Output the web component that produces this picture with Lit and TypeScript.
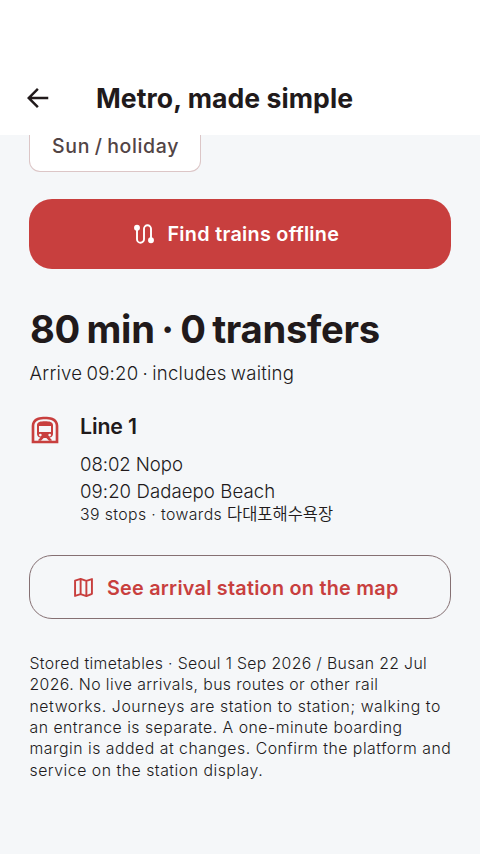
import { LitElement, html, css, svg } from "lit";
import { customElement } from "lit/decorators.js";

const notes = [
  "Stored timetables · Seoul 1 Sep 2026 / Busan 22 Jul",
  "2026. No live arrivals, bus routes or other rail",
  "networks. Journeys are station to station; walking to",
  "an entrance is separate. A one-minute boarding",
  "margin is added at changes. Confirm the platform and",
  "service on the station display.",
];

@customElement("app-root")
export class AppRoot extends LitElement {
  static styles = css`
    :host { display: block; width: 480px; height: 854px; overflow: hidden; background: #f5f7f9; color: #211a1b;
      font-family: Inter, "Noto Sans CJK KR", sans-serif; }
    * { box-sizing: border-box; }
    svg { display: block; flex: none; }
    h1, h2, h3, p { margin: 0; }
    span, h1, h2, h3, p { white-space: nowrap; }
    header { height: 135px; padding: 61px 24px 0 22px; background: #fff; display: flex; }
    .back { width: 30px; height: 30px; margin: 22px 44px 0 0; }
    h1 { font-size: 26.6px; line-height: 74px; font-weight: 650; letter-spacing: 0.06px; }
    main { padding: 0 29px; display: flex; flex-direction: column; }
    .chip { width: 172px; height: 37px; border: 1px solid #dcc6c7; border-top: 0; border-radius: 0 0 11px 11px; background: #fff;
      color: #524445; font-size: 19.5px; line-height: 22px; font-weight: 540; padding-left: 22px; letter-spacing: 0.65px; word-spacing: -1.2px; }
    .button { margin-left: 0.4px; width: 421.3px; display: flex; align-items: center; border-radius: 23px; font-size: 19.8px; font-weight: 620; }
    .find { margin-top: 26.5px; height: 70px; background: #c83f3e; color: #fff; padding-left: 103px; gap: 11px; letter-spacing: 0.3px; }
    h2 { margin: 35.5px 0 0 1px; font-size: 38.2px; line-height: 50px; font-weight: 700; letter-spacing: -0.3px; word-spacing: -2.2px; }
    .arrive { margin: 5px 0 0 0.5px; font-size: 18.6px; line-height: 28px; font-weight: 350; letter-spacing: 0.25px; word-spacing: -1.4px; }
    .leg { margin-top: 25px; display: flex; }
    .train { margin: 2px 19px 0 0; }
    h3 { font-size: 21.3px; line-height: 28px; font-weight: 620; letter-spacing: -0.1px; }
    .stops { margin-top: 11px; font-size: 18.6px; line-height: 26.7px; font-weight: 350; }
    .from { letter-spacing: -0.07px; }
    .to { letter-spacing: 0.07px; }
    .towards { font-size: 15.8px; line-height: 22px; font-weight: 350; letter-spacing: 0.4px; }
    .ko { font-size: 16.5px; line-height: 1; letter-spacing: 0; }
    .map { margin-top: 29px; height: 64px; border: 1px solid #857073; color: #c83f3e; padding: 1px 0 0 42px; gap: 11.5px; letter-spacing: 0.26px; }
    .notes { margin: 33.4px 0 0 0.5px; font-size: 15.8px; line-height: 21.4px; font-weight: 350; }
    .n0 { letter-spacing: 0.35px; }
    .n1 { letter-spacing: 0.39px; }
    .n2 { letter-spacing: 0.57px; }
    .n3 { letter-spacing: 0.5px; }
    .n4, .n5 { letter-spacing: 0.52px; }
  `;

  render() {
    return html`
      <header>
        <svg class="back" viewBox="0 0 24 24" fill="#211a1b">${svg`<path d="M7.8 13l5.6 5.6L12 20l-8-8 8-8 1.4 1.4L7.8 11H21v2z"/>`}</svg>
        <h1>Metro, made simple</h1>
      </header>
      <main>
        <div class="chip"><span>Sun / holiday</span></div>
        <div class="button find">
          <svg width="24" height="24" viewBox="0 0 24 24" fill="none" stroke="#fff" stroke-width="1.9">
            <path d="M5 6v11.2a3.5 3.5 0 0 0 7 0V6.8a3.5 3.5 0 0 1 7 0V18"/><circle cx="5" cy="5.8" r="2" fill="#fff"/><circle cx="19" cy="18.2" r="2" fill="#fff"/>
          </svg>
          <span>Find trains offline</span>
        </div>
        <h2>80 min · 0 transfers</h2>
        <p class="arrive">Arrive 09:20 · includes waiting</p>
        <section class="leg">
          <svg class="train" width="32" height="32" viewBox="0 0 24 24" fill="#c83f3e" fill-rule="evenodd">
            <path d="M17.8 2.8C16 2.09 13.86 2 12 2s-4 .09-5.8.8C3.53 3.84 2 6.05 2 8.86V22h20V8.86c0-2.81-1.53-5.02-4.2-6.06zM20 20H4V8.86c0-2 1.01-3.45 2.93-4.2C8.41 4.08 10.32 4 12 4s3.59.08 5.07.66C18.99 5.41 20 6.86 20 8.86z"/>
            <path d="M12 5.5c-3.3 0-6 .4-6 3V15c0 1.45 1.18 2.63 2.63 2.63L7 19.25V20h2l2-2h2l2 2h2v-.75l-1.63-1.62C16.82 17.63 18 16.45 18 15V8.5c0-2.6-2.7-3-6-3zM7.5 9h9v4.5h-9zM8.5 14.8a1 1 0 1 1 0 2 1 1 0 0 1 0-2zM15.5 14.8a1 1 0 1 1 0 2 1 1 0 0 1 0-2z"/>
          </svg>
          <div>
            <h3>Line 1</h3>
            <div class="stops"><p class="from">08:02 Nopo</p><p class="to">09:20 Dadaepo Beach</p></div>
            <p class="towards">39 stops · towards <span class="ko">다대포해수욕장</span></p>
          </div>
        </section>
        <div class="button map">
          <svg width="23" height="23" viewBox="0 0 24 24" fill="none" stroke="#c83f3e" stroke-width="2" stroke-linejoin="round">
            <path d="M3.2 4.8L9 3l6 2 5.8-1.8v15.4L15 21l-6-2-5.8 1.8zM9 3v16M15 5v16"/>
          </svg>
          <span>See arrival station on the map</span>
        </div>
        <div class="notes">${notes.map((line, i) => html`<p class="n${i}">${line}</p>`)}</div>
      </main>
    `;
  }
}
